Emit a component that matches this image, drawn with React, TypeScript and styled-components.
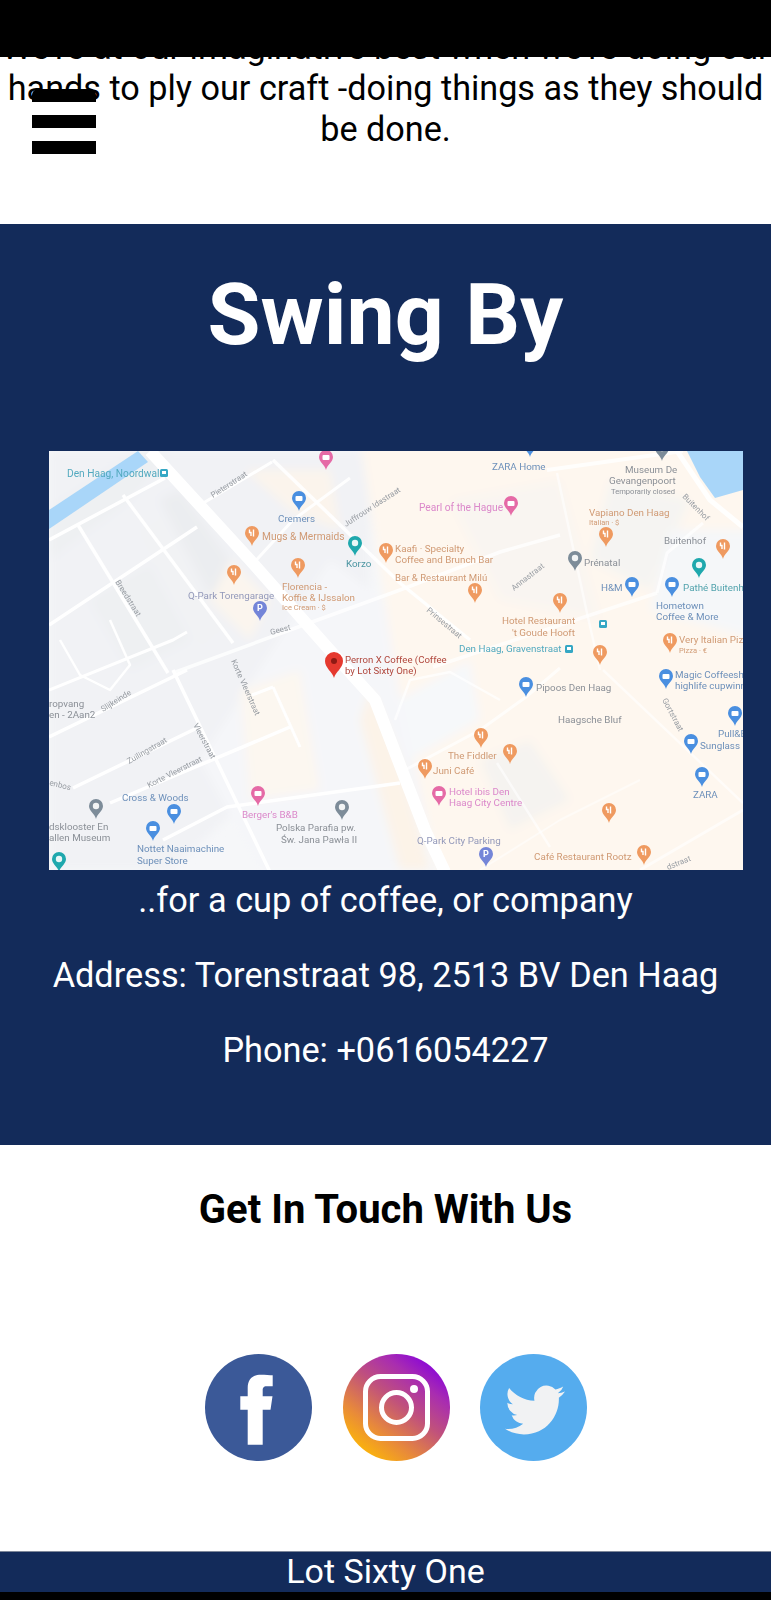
import React from "react";
import styled, { createGlobalStyle } from "styled-components";

const Global = createGlobalStyle`
  html, body { margin: 0; padding: 0; background: #fff; }
  * { box-sizing: border-box; }
  body { font-family: Roboto, "Liberation Sans", sans-serif; }
`;

const Page = styled.div`
  position: relative;
  width: 771px;
  height: 1600px;
  overflow: hidden;
  display: flex;
  flex-direction: column;
  background: #fff;
`;
const StatusBar = styled.div`
  height: 57px;
  flex: none;
  background: #000;
`;
const Intro = styled.section`
  height: 167px;
  flex: none;
  overflow: hidden;
  background: #fff;
`;
const IntroText = styled.p`
  margin: -30px 0 0;
  padding: 0;
  text-align: center;
  font-size: 34.2px;
  line-height: 41px;
  color: #000;
`;
const Burger = styled.button`
  position: absolute;
  left: 32px;
  top: 89px;
  width: 64px;
  padding: 0;
  border: 0;
  background: none;
  display: flex;
  flex-direction: column;
  gap: 13px;
`;
const BurgerBar = styled.span<{ $top?: boolean }>`
  display: block;
  height: 13px;
  background: #000;
  border-radius: ${(p) => (p.$top ? "6px 6px 0 0" : "0")};
`;
const Visit = styled.section`
  height: 921px;
  flex: none;
  background: #132b5a;
  color: #fff;
  padding-top: 46px;
  display: flex;
  flex-direction: column;
  align-items: center;
`;
const VisitTitle = styled.h1`
  margin: 0;
  font-size: 86px;
  line-height: 90px;
  font-weight: 700;
`;
const MapFrame = styled.svg`
  display: block;
  width: 694px;
  height: 419px;
  margin-top: 91px;
  margin-left: 21px;
  flex: none;
  filter: blur(0.5px);
  font-family: Roboto, "Liberation Sans", sans-serif;
`;
const VisitInfo = styled.div`
  margin-top: 10px;
  display: flex;
  flex-direction: column;
  gap: 34px;
  align-items: center;
`;
const InfoLine = styled.p`
  margin: 0;
  font-size: 34.3px;
  line-height: 41px;
  white-space: nowrap;
`;
const Touch = styled.section`
  height: 406px;
  flex: none;
  background: #fff;
  display: flex;
  flex-direction: column;
  align-items: center;
  padding-top: 40px;
`;
const TouchTitle = styled.h2`
  margin: 0;
  font-size: 40px;
  line-height: 50px;
  font-weight: 700;
  color: #000;
`;
const Socials = styled.div`
  margin-top: 119px;
  margin-left: 21px;
  display: flex;
  gap: 30.5px;
`;
const SocialLink = styled.a`
  display: block;
  width: 107px;
  height: 107px;
`;
const SocialIcon = styled.svg`
  display: block;
  width: 107px;
  height: 107px;
`;
const Footer = styled.footer`
  height: 41px;
  flex: none;
  background: #132b5a;
  border-top: 1px solid #7d8799;
  color: #fff;
  text-align: center;
  font-size: 34px;
  line-height: 38px;
  overflow: hidden;
`;
const BottomBar = styled.div`
  flex: 1;
  background: #000;
`;

type Pin = [number, number, string];
const O = "#ef9a60", B = "#4a8fe0", K = "#e56aa6", T = "#1fa8ad", G = "#7d8c99", P = "#7485d8";
const pins: Pin[] = [
  [326, 470, K], [299, 511, B], [252, 546, O], [355, 556, T], [234, 585, O], [298, 578, O], [260, 621, P], [386, 563, O],
  [530, 457, B], [662, 461, G], [511, 516, K], [606, 547, O], [723, 559, O], [575, 571, G], [699, 578, T], [475, 603, O],
  [632, 597, B], [672, 597, B], [560, 613, O], [600, 665, O], [670, 653, O], [666, 689, B],
  [96, 819, G], [174, 824, B], [153, 841, B], [258, 806, K], [342, 820, G], [59, 872, T],
  [526, 697, B], [481, 748, O], [510, 764, O], [425, 779, O], [439, 806, K], [609, 823, O], [644, 865, O], [486, 867, P],
  [735, 726, B], [691, 754, B], [702, 787, B],
];

type Label = [string, number, number, string, number?, number?];
const cO = "#d09a74", cB = "#6d90ba", cG = "#8b9097", cK = "#db88ca", cT = "#52a9bf", cR = "#b0463c", cS = "#989da3", cP = "#9399ba";
const labels: Label[] = [
  ["Den Haag, Noordwal", 67, 477, cT, 10.2],
  ["Cremers", 278, 522, cB],
  ["Mugs & Mermaids", 262, 540, cO, 10.2],
  ["Korzo", 346, 567, "#4b95a1"],
  ["Q-Park Torengarage", 188, 599, cP],
  ["Florencia -", 282, 590, cO],
  ["Koffie & IJssalon", 282, 601, cO],
  ["Ice Cream · $", 282, 610, cO, 7.5],
  ["Geest", 271, 635, cS, 8, -15],
  ["Pieterstraat", 213, 498, cS, 8, -33],
  ["Breedstraat", 115, 582, cS, 8, 58],
  ["Juffrouw Idastraat", 346, 527, cS, 8, -33],
  ["Perron X Coffee (Coffee", 345, 663, cR, 9.6],
  ["by Lot Sixty One)", 345, 674, cR, 9.6],
  ["Korte Vleerstraat", 231, 661, cS, 8, 66],
  ["ZARA Home", 492, 470, cB],
  ["Museum De", 625, 473, cG],
  ["Gevangenpoort", 609, 484, cG],
  ["Temporarily closed", 611, 494, cG, 7.6],
  ["Buitenhof", 682, 497, cS, 8, 45],
  ["Pearl of the Hague", 419, 511, cK, 10.2],
  ["Vapiano Den Haag", 589, 516, cO],
  ["Italian · $", 589, 525, cO, 7.5],
  ["Buitenhof", 664, 544, cG],
  ["Kaafi · Specialty", 395, 552, cO],
  ["Coffee and Brunch Bar", 395, 563, cO],
  ["Bar & Restaurant Milú", 395, 581, cO, 9.6],
  ["Prénatal", 584, 566, cG],
  ["H&M", 601, 591, cB],
  ["Pathé Buitenhof", 683, 591, "#52a3ad"],
  ["Hometown", 656, 609, cB],
  ["Coffee & More", 656, 620, cB],
  ["Annastraat", 514, 591, cS, 8, -38],
  ["Prinsestraat", 426, 611, cS, 8, 40],
  ["Hotel Restaurant", 502, 624, cO],
  ["'t Goude Hooft", 512, 636, cO],
  ["Den Haag, Gravenstraat", 459, 652, cT],
  ["Very Italian Pizza", 679, 643, cO],
  ["Pizza · €", 679, 653, cO, 7.5],
  ["Magic Coffeeshop", 675, 678, cB],
  ["highlife cupwinner", 675, 689, cB],
  ["ropvang", 49, 707, cG],
  ["en - 2Aan2", 49, 718, cG],
  ["Slijkeinde", 103, 712, cS, 8, -32],
  ["Vleerstraat", 193, 725, cS, 8, 62],
  ["Zuilingstraat", 129, 764, cS, 8, -30],
  ["Korte Vleerstraat", 149, 788, cS, 8, -27],
  ["enbos", 49, 785, cS, 8, 14],
  ["Cross & Woods", 122, 801, cB],
  ["dsklooster En", 49, 830, cG],
  ["allen Museum", 49, 841, cG],
  ["Nottet Naaimachine", 137, 852, cB],
  ["Super Store", 137, 864, cB],
  ["Berger's B&B", 242, 818, cK],
  ["Polska Parafia pw.", 276, 831, cG],
  ["Św. Jana Pawła II", 281, 843, cG],
  ["Pipoos Den Haag", 536, 691, cG],
  ["Haagsche Bluf", 558, 723, cG],
  ["Gortstraat", 662, 700, cS, 8, 62],
  ["Pull&B", 718, 737, cB],
  ["Sunglass", 700, 749, cB],
  ["ZARA", 693, 798, cB],
  ["The Fiddler", 448, 759, cO],
  ["Juni Café", 433, 774, cO],
  ["Hotel ibis Den", 449, 795, cK],
  ["Haag City Centre", 449, 806, cK],
  ["Q-Park City Parking", 417, 844, cP],
  ["Café Restaurant Rootz", 534, 860, cO],
  ["dstraat", 668, 870, cS, 8, -22],
];

const roads: [string, number, number][] = [
  ["150,451 250,560 327,647 375,700 398,760 425,830 445,872", 12, 1],
  ["49,540 165,478", 3.5, 1], ["200,505 272,462", 3, 1],
  ["49,625 197,527", 3.5, 1], ["123,495 233,643", 3.5, 1], ["78,525 168,673", 3.5, 1],
  ["49,690 173,640 187,632", 3, 1], ["173,673 290,630 400,590 500,552 560,535", 3.5, 0.8],
  ["273,460 400,583 470,640", 3.5, 0.9], ["250,567 293,520 350,478", 3, 0.9],
  ["49,737 187,670", 3.5, 1], ["173,670 270,872", 3.5, 1], ["73,788 197,728", 3.5, 1],
  ["110,803 290,727", 3.5, 1], ["273,687 300,747", 3, 1], ["252,695 273,687", 3, 1],
  ["163,840 227,807 400,783", 3.5, 1], ["557,473 587,613 600,670", 2.5, 0.6],
  ["433,667 657,593", 3.5, 0.7], ["657,593 667,553 703,523", 3, 0.7],
  ["547,470 683,451", 4, 0.8], ["677,451 710,500 743,527", 5, 0.9],
  ["603,670 743,803", 2.5, 0.6], ["497,763 550,847", 2.5, 0.6],
  ["405,770 480,730 526,697 560,668", 3, 0.7], ["395,720 410,680 450,672 500,700", 2.5, 0.7],
  ["480,870 560,820 640,780", 2, 0.5], ["640,870 743,810", 3, 0.6],
  ["60,640 80,675 110,690 130,665 110,620", 2.5, 1],
];

const softBlocks: [string, string][] = [
  ["49,451 370,451 370,690 170,870 49,870", "#f1f2f5"],
  ["330,560 450,650 420,870 260,870 200,760", "#f5f6f9"],
  ["135,530 190,500 260,600 200,650", "#f1f2f4"],
  ["240,690 300,670 320,790 250,800", "#fcf7f0"],
  ["360,440 760,440 760,880 440,880 400,700", "#fef7ef"],
  ["450,500 560,480 600,620 500,600", "#f9f5f1"],
  ["610,480 690,500 650,590 590,560", "#f5f4f2"],
  ["670,530 760,530 760,640 650,610", "#f5f7f9"],
  ["398,700 470,660 480,720 410,760", "#f6f8fa"],
  ["480,760 530,740 570,800 510,830", "#f5f3f0"],
  ["49,510 138,451 170,451 130,500 49,560", "#eef0f2"],
  ["160,500 180,490 240,575 210,595", "#ebedf0"],
  ["90,600 150,565 190,640 130,670", "#eef0f2"],
  ["245,470 330,470 340,530 290,510", "#fbf4ec"],
  ["230,560 270,600 250,640 210,600", "#fbf5ee"],
  ["370,690 400,760 430,870 400,870 360,720", "#fcf3e8"],
];

const PinGlyph = ({ x, y, c }: { x: number; y: number; c: string }) => {
  const cy = y - 13;
  if (c === O) {
    return (
      <path
        d={`M${x - 2.5} ${cy - 3.500}v3h1.500v3.500M${x + 1.500} ${cy - 3.500}v7`}
        fill="none"
        stroke="#fff"
        strokeWidth={1.400}
      />
    );
  }
  if (c === B || c === K) {
    return <rect x={x - 3.500} y={cy - 2} width={7} height={5} rx={1} fill="#fff" />;
  }
  if (c === P) {
    return (
      <text x={x} y={cy + 3} fill="#fff" fontSize={9} fontWeight={700} textAnchor="middle">
        P
      </text>
    );
  }
  return <circle cx={x} cy={cy} r={3.200} fill="#fff" opacity={0.9} />;
};

const MapPin = ({ x, y, c }: { x: number; y: number; c: string }) => (
  <g>
    <path d={`M${x} ${y}c-1-5-7-8-7-13a7 7 0 0 1 14 0c0 5-6 8-7 13z`} fill={c} />
    <PinGlyph x={x} y={y} c={c} />
  </g>
);

const TransitSquare = ({ x, y }: { x: number; y: number }) => (
  <g>
    <rect x={x - 4} y={y - 4} width={8} height={8} rx={1.5} fill="#35a7c4" />
    <rect x={x - 2} y={y - 2} width={4} height={3} fill="#fff" />
  </g>
);

const StreetMap = () => (
  <MapFrame viewBox="49 451 694 419" role="img" aria-label="Map">
    <defs>
      <filter id="soft" x="-5%" y="-5%" width="110%" height="110%">
        <feGaussianBlur stdDeviation="5" />
      </filter>
    </defs>
    <rect x={49} y={451} width={694} height={419} fill="#f6f7f9" />
    <g filter="url(#soft)">
      {softBlocks.map(([pts, fill], i) => <polygon key={i} points={pts} fill={fill} />)}
    </g>
    <polygon points="49,510 138,451 148,462 49,529" fill="#a9d6f9" />
    <polygon points="687,451 743,451 743,490 715,498 700,477" fill="#a9d6f9" />
    {roads.map(([pts, w, o], i) => (
      <polyline key={i} points={pts} fill="none" stroke="#fff" strokeOpacity={o} strokeWidth={w} strokeLinejoin="round" />
    ))}
    {pins.map(([x, y, c], i) => <MapPin key={i} x={x} y={y} c={c} />)}
    <TransitSquare x={164} y={473} />
    <TransitSquare x={603} y={624} />
    <TransitSquare x={569} y={649} />
    <path d="M334 678c-1.500-6-9-10-9-17a9 9 0 0 1 18 0c0 7-7.500 11-9 17z" fill="#e5392f" />
    <circle cx={334} cy={661} r={3} fill="#8e1a14" />
    {labels.map(([t, x, y, c, s, r], i) => (
      <text
        key={i}
        x={x}
        y={y}
        fill={c}
        fontSize={s ?? 9.8}
        transform={r ? `rotate(${r} ${x} ${y})` : undefined}
      >
        {t}
      </text>
    ))}
  </MapFrame>
);

const App = () => (
  <Page>
    <Global />
    <StatusBar />
    <Intro>
      <IntroText>
        We're at our imaginative best when we're doing our hands to ply our craft -doing things as they should be done.
      </IntroText>
    </Intro>
    <Burger aria-label="Menu">
      <BurgerBar $top />
      <BurgerBar />
      <BurgerBar />
    </Burger>
    <Visit>
      <VisitTitle>Swing By</VisitTitle>
      <StreetMap />
      <VisitInfo>
        <InfoLine>..for a cup of coffee, or company</InfoLine>
        <InfoLine>Address: Torenstraat 98, 2513 BV Den Haag</InfoLine>
        <InfoLine>Phone: +0616054227</InfoLine>
      </VisitInfo>
    </Visit>
    <Touch>
      <TouchTitle>Get In Touch With Us</TouchTitle>
      <Socials>
        <SocialLink href="#facebook" aria-label="Facebook">
          <SocialIcon viewBox="0 0 107 107">
            <circle cx={53.5} cy={53.5} r={53.5} fill="#3b5998" />
            <path d="M42.700 90.700V55.700H35.300V42.300H42.700V34C42.700 25 48 20.700 56 20.700C60 20.700 65 21 67.700 21.300V32.300H61.500C58.500 32.300 57.700 34 57.700 36.500V42.300H67.500L65.500 55.700H57.700V90.700Z" fill="#fff" />
          </SocialIcon>
        </SocialLink>
        <SocialLink href="#instagram" aria-label="Instagram">
          <SocialIcon viewBox="0 0 107 107">
            <defs>
              <linearGradient id="ig" x1="0.2" y1="0.95" x2="0.85" y2="0.1">
                <stop offset="0" stopColor="#fdb707" />
                <stop offset="0.25" stopColor="#e88a3a" />
                <stop offset="0.55" stopColor="#c0517c" />
                <stop offset="0.8" stopColor="#a92db0" />
                <stop offset="1" stopColor="#8a06d8" />
              </linearGradient>
            </defs>
            <circle cx={53.5} cy={53.5} r={53.5} fill="url(#ig)" />
            <rect x={22.5} y={22.5} width={62} height={62} rx={15} fill="none" stroke="#fff" strokeWidth={5} />
            <circle cx={53.5} cy={53.5} r={15} fill="none" stroke="#fff" strokeWidth={5} />
            <circle cx={71} cy={35} r={4} fill="#fff" />
          </SocialIcon>
        </SocialLink>
        <SocialLink href="#twitter" aria-label="Twitter">
          <SocialIcon viewBox="0 0 107 107">
            <circle cx={53.5} cy={53.5} r={53.5} fill="#55acee" />
            <g transform="translate(25 26) scale(2.5)">
              <path d="M23.953 4.57a10 10 0 01-2.825.775 4.958 4.958 0 002.163-2.723c-.951.555-2.005.959-3.127 1.184a4.92 4.92 0 00-8.384 4.482C7.69 8.095 4.067 6.13 1.64 3.162a4.822 4.822 0 00-.666 2.475c0 1.71.87 3.213 2.188 4.096a4.904 4.904 0 01-2.228-.616v.06a4.923 4.923 0 003.946 4.827 4.996 4.996 0 01-2.212.085 4.936 4.936 0 004.604 3.417 9.867 9.867 0 01-6.102 2.105c-.39 0-.779-.023-1.17-.067a13.995 13.995 0 007.557 2.209c9.053 0 13.998-7.496 13.998-13.985 0-.21 0-.42-.015-.63A9.935 9.935 0 0024 4.59z" fill="#f1f2f3" />
            </g>
          </SocialIcon>
        </SocialLink>
      </Socials>
    </Touch>
    <Footer>Lot Sixty One</Footer>
    <BottomBar />
  </Page>
);

export default App;
